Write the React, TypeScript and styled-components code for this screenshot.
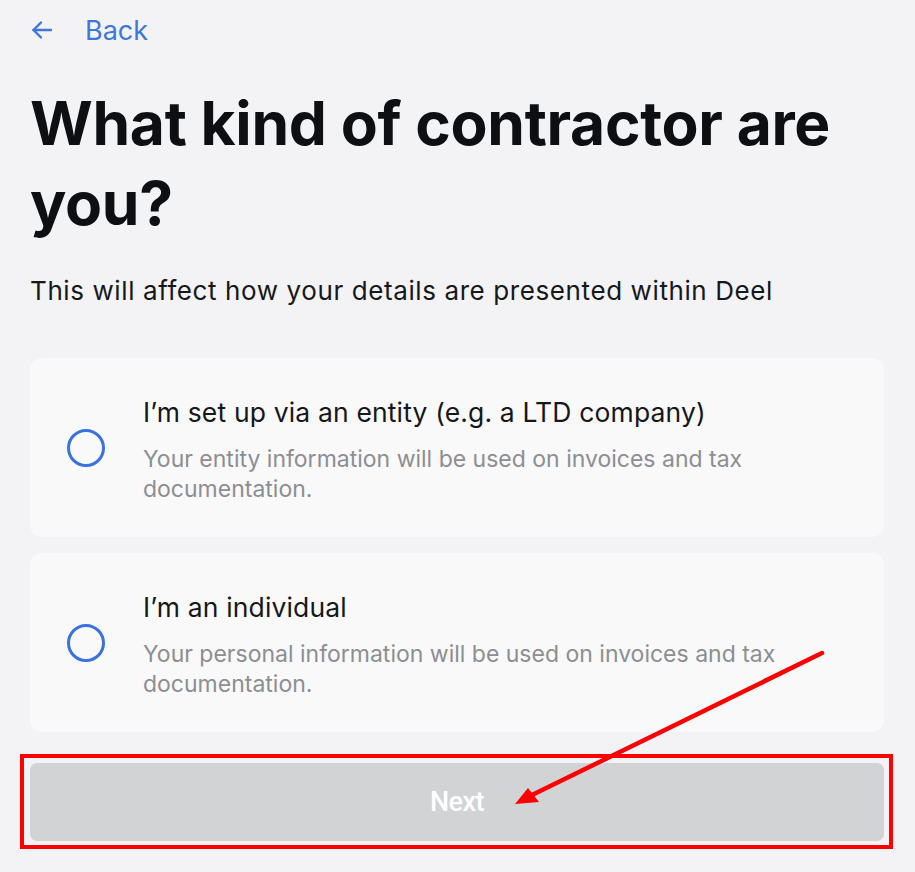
import React from "react";
import styled, { createGlobalStyle } from "styled-components";

const GlobalStyle = createGlobalStyle`
  html, body {
    margin: 0;
    padding: 0;
    background: #f3f2f5;
  }
  body {
    font-family: Inter, "Noto Sans", sans-serif;
    -webkit-font-smoothing: antialiased;
  }
`;

const Page = styled.div`
  position: relative;
  width: 915px;
  height: 872px;
  box-sizing: border-box;
  padding: 10px 31px 0 30px;
  display: flex;
  flex-direction: column;
  overflow: hidden;
`;

const BackLink = styled.button`
  display: flex;
  align-items: center;
  gap: 31px;
  height: 40px;
  padding: 0;
  border: none;
  background: none;
  color: #3d77d9;
  font-family: Inter, sans-serif;
  font-size: 27px;
  cursor: pointer;
  align-self: flex-start;
`;

const Heading = styled.h1`
  margin: 33px 0 0;
  font-size: 60.5px;
  line-height: 80px;
  font-weight: 700;
  letter-spacing: -0.3px;
  color: #0d0f12;
`;

const Subtitle = styled.p`
  margin: 32px 0 0;
  font-size: 26px;
  line-height: 32px;
  letter-spacing: 0.6px;
  color: #16181b;
`;

const Options = styled.div`
  margin-top: 51px;
  display: flex;
  flex-direction: column;
  gap: 16px;
`;

const OptionCard = styled.label`
  display: flex;
  align-items: center;
  gap: 38px;
  height: 179px;
  box-sizing: border-box;
  padding: 0 36px 0 37px;
  background: #f9f9fa;
  border-radius: 12px;
  cursor: pointer;
`;

const Radio = styled.span`
  flex: none;
  width: 32px;
  height: 32px;
  border-radius: 50%;
  border: 3px solid #3a72df;
  box-sizing: content-box;
`;

const OptionText = styled.div`
  display: flex;
  flex-direction: column;
  gap: 16px;
  padding-top: 4px;
`;

const OptionTitle = styled.div`
  font-size: 26.5px;
  line-height: 32px;
  letter-spacing: 0.15px;
  color: #15171a;
`;

const OptionHint = styled.div`
  font-size: 23px;
  line-height: 30px;
  color: #8c8e92;
  max-width: 640px;
`;

const NextButton = styled.button`
  margin-top: 31px;
  height: 78px;
  width: 100%;
  border: none;
  border-radius: 7px;
  background: #d2d3d5;
  color: #ffffff;
  font-family: Roboto, Inter, sans-serif;
  font-size: 27px;
  font-weight: 500;
  letter-spacing: -0.5px;
  cursor: not-allowed;
`;

const Markup = styled.svg`
  position: absolute;
  left: 0;
  top: 0;
  pointer-events: none;
`;

const ArrowLeft = () => (
  <svg width="24" height="24" viewBox="0 0 24 24" fill="none" stroke="#3d77d9" strokeWidth="2.4" strokeLinecap="round" strokeLinejoin="round">
    <path d="M21 12H3.5" />
    <path d="M11 4.5 3.5 12l7.5 7.5" />
  </svg>
);

const options = [
  {
    title: "I’m set up via an entity (e.g. a LTD company)",
    hint: "Your entity information will be used on invoices and tax documentation.",
  },
  {
    title: "I’m an individual",
    hint: "Your personal information will be used on invoices and tax documentation.",
  },
];

export default function App() {
  return (
    <>
      <GlobalStyle />
      <Page>
        <BackLink>
          <ArrowLeft />
          Back
        </BackLink>
        <Heading>
          What kind of contractor are
          <br />
          you?
        </Heading>
        <Subtitle>This will affect how your details are presented within Deel</Subtitle>
        <Options>
          {options.map((o) => (
            <OptionCard key={o.title}>
              <Radio />
              <OptionText>
                <OptionTitle>{o.title}</OptionTitle>
                <OptionHint>{o.hint}</OptionHint>
              </OptionText>
            </OptionCard>
          ))}
        </Options>
        <NextButton disabled>Next</NextButton>
        <Markup width="915" height="872" viewBox="0 0 915 872">
          <rect x="22" y="756" width="869" height="91" fill="none" stroke="#ff0000" strokeWidth="4" />
          <line x1="822" y1="653" x2="532" y2="795" stroke="#ff0000" strokeWidth="4.5" strokeLinecap="round" />
          <polygon points="515,804 528,788 539,802" fill="#ff0000" />
        </Markup>
      </Page>
    </>
  );
}
